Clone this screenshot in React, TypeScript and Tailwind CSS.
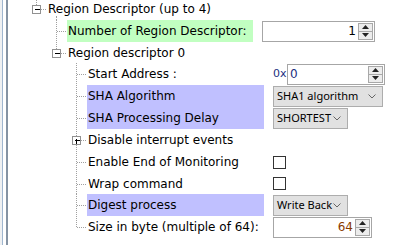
import React from "react";

type ConnKind = "empty" | "tee" | "ell" | "pipe" | "boxLast" | "boxTee" | "plusTee";

const LINE = "#a0a0a0";

function Conn({ kind, h }: { kind: ConnKind; h: number }) {
  const c = 10.5;
  const m = Math.round(h / 2) + 0.5;
  const els: React.ReactNode[] = [];
  const dash = { stroke: LINE, strokeDasharray: "1 1", strokeWidth: 1 };
  const hasBox = kind === "boxLast" || kind === "boxTee" || kind === "plusTee";
  if (kind === "tee" || kind === "pipe" || kind === "boxTee" || kind === "plusTee") {
    els.push(<line key="v" x1={c} y1={0} x2={c} y2={h} {...dash} />);
  }
  if (kind === "ell" || kind === "boxLast") {
    els.push(<line key="v" x1={c} y1={0} x2={c} y2={m} {...dash} />);
  }
  if (kind === "tee" || kind === "ell") {
    els.push(<line key="h" x1={c} y1={m} x2={20} y2={m} {...dash} />);
  }
  if (hasBox) {
    els.push(<line key="h" x1={15} y1={m} x2={20} y2={m} {...dash} />);
    els.push(
      <rect key="b" x={c - 4} y={m - 4} width={8} height={8} fill="#fff" stroke="#919191" strokeWidth={1} />
    );
    els.push(<line key="mi" x1={c - 2} y1={m} x2={c + 3} y2={m} stroke="#000" strokeWidth={1} />);
    if (kind === "plusTee") {
      els.push(<line key="pl" x1={c} y1={m - 2} x2={c} y2={m + 3} stroke="#000" strokeWidth={1} />);
    }
  }
  return (
    <svg width={20} height={h} className="shrink-0" shapeRendering="crispEdges">
      {els}
    </svg>
  );
}

function Spinner() {
  return (
    <div className="flex flex-col w-[15px] h-[17px] border border-[#a8a8a8] bg-[#ececec] shrink-0">
      <div className="flex-1 flex items-center justify-center border-b border-[#a8a8a8]">
        <svg width="7" height="4"><polygon points="0,4 7,4 3.5,0" fill="#222" /></svg>
      </div>
      <div className="flex-1 flex items-center justify-center">
        <svg width="7" height="4"><polygon points="0,0 7,0 3.5,4" fill="#222" /></svg>
      </div>
    </div>
  );
}

function SpinBox({ w, value, color, align }: { w: number; value: string; color: string; align: "left" | "right" }) {
  return (
    <div
      className="flex items-center h-[21px] border border-[#a6a6a6] bg-white pl-[2px] pr-[1px] shrink-0"
      style={{ width: w }}
    >
      <div
        className={"flex-1 text-[12px] pr-[2px] " + (align === "right" ? "text-right" : "text-left")}
        style={{ color, fontFamily: '"DejaVu Sans", Verdana, sans-serif' }}
      >
        {value}
      </div>
      <Spinner />
    </div>
  );
}

function Select({ w, label }: { w: number; label: string }) {
  return (
    <div
      className="flex items-center justify-between h-[21px] border border-[#adadad] bg-[#e1e1e1] pl-[3px] pr-[6px] shrink-0"
      style={{ width: w }}
    >
      <span
        className="text-[11px] text-black whitespace-nowrap"
        style={{ fontFamily: '"Noto Sans", "Open Sans", sans-serif' }}
      >
        {label}
      </span>
      <svg width="8" height="5" className="shrink-0">
        <polyline points="0.5,0.5 4,4 7.5,0.5" fill="none" stroke="#666" strokeWidth="1" />
      </svg>
    </div>
  );
}

function Check() {
  return <div className="w-[13px] h-[13px] border border-[#333] bg-white" />;
}

type Row = {
  h: number;
  conns: ConnKind[];
  label: string;
  hl?: string;
  labelW?: number;
  value?: React.ReactNode;
  tail?: boolean;
};

export default function App() {
  const rows: Row[] = [
    { h: 22, conns: ["boxLast"], label: "Region Descriptor (up to 4)", tail: true },
    {
      h: 22,
      conns: ["empty", "tee"],
      label: "Number of Region Descriptor:",
      hl: "#c1ffc1",
      labelW: 186,
      value: <SpinBox w={113} value="1" color="#000" align="right" />,
    },
    { h: 21, conns: ["empty", "boxLast"], label: "Region descriptor 0" },
    {
      h: 22,
      conns: ["empty", "empty", "tee"],
      label: "Start Address :",
      labelW: 177,
      value: (
        <div className="flex items-center">
          <span
            className="text-[11px] w-[14px] shrink-0 text-[#1c2f80]"
            style={{ fontFamily: '"DejaVu Sans", sans-serif' }}
          >
            0x
          </span>
          <SpinBox w={98} value="0" color="#1c2f80" align="left" />
        </div>
      ),
    },
    {
      h: 22,
      conns: ["empty", "empty", "tee"],
      label: "SHA Algorithm",
      hl: "#c0c0ff",
      labelW: 177,
      value: <Select w={110} label="SHA1 algorithm" />,
    },
    {
      h: 22,
      conns: ["empty", "empty", "tee"],
      label: "SHA Processing Delay",
      hl: "#c0c0ff",
      labelW: 177,
      value: <Select w={75} label="SHORTEST" />,
    },
    { h: 22, conns: ["empty", "empty", "plusTee"], label: "Disable interrupt events", labelW: 177 },
    {
      h: 22,
      conns: ["empty", "empty", "tee"],
      label: "Enable End of Monitoring",
      labelW: 177,
      value: <Check />,
    },
    { h: 21, conns: ["empty", "empty", "tee"], label: "Wrap command", labelW: 177, value: <Check /> },
    {
      h: 22,
      conns: ["empty", "empty", "tee"],
      label: "Digest process",
      hl: "#c0c0ff",
      labelW: 177,
      value: <Select w={75} label="Write Back" />,
    },
    {
      h: 22,
      conns: ["empty", "empty", "ell"],
      label: "Size in byte (multiple of 64):",
      labelW: 177,
      value: <SpinBox w={99} value="64" color="#8a3a00" align="right" />,
    },
  ];

  return (
    <div
      className="w-[408px] h-[245px] bg-white overflow-hidden flex"
      style={{ fontFamily: '"DejaVu Sans", Verdana, sans-serif' }}
    >
      <div className="w-[8px] h-full flex shrink-0">
        <div className="w-[2px] bg-[#eef0f2]" />
        <div className="w-[1px] bg-[#9fb6cf]" />
        <div className="w-[3px] bg-white" />
        <div className="w-[2px] bg-[#8593a3]" />
      </div>
      <div className="flex flex-col pl-[18px] mt-[-2px]">
        {rows.map((r, i) => (
          <div key={i} className="relative flex items-center" style={{ height: r.h }}>
            {r.conns.map((k, j) => (
              <Conn key={j} kind={k} h={r.h} />
            ))}
            {r.tail && (
              <div className="absolute left-[30px] bottom-0 h-[4px] border-l border-dotted border-[#a0a0a0]" />
            )}
            {r.labelW ? (
              <>
                <div
                  className="h-full flex items-center pl-[1px] ml-[1px] text-[12px] text-black whitespace-nowrap shrink-0"
                  style={{ width: r.labelW, background: r.hl }}
                >
                  {r.label}
                </div>
                <div className="ml-[9px] flex items-center">{r.value}</div>
              </>
            ) : (
              <div className="h-full flex items-center pl-[2px] text-[12px] text-black whitespace-nowrap">
                {r.label}
              </div>
            )}
          </div>
        ))}
      </div>
    </div>
  );
}
